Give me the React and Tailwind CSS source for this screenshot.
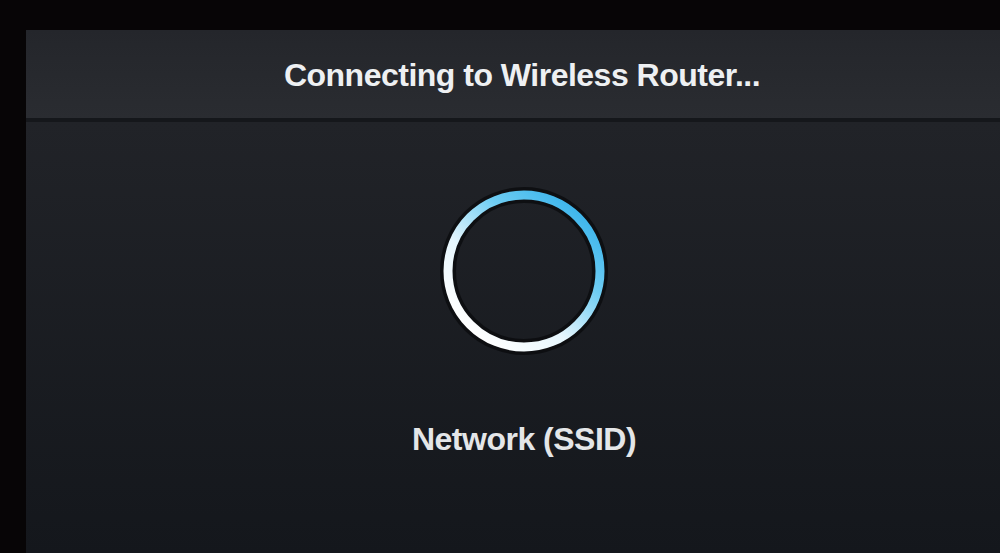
import React from 'react';

const Spinner = () => (
    <svg width="176" height="176" viewBox="0 0 176 176">
        <defs>
            <linearGradient id="ring" x1="0.15" y1="0.9" x2="0.85" y2="0.1">
                <stop offset="0" stopColor="#ffffff" />
                <stop offset="0.35" stopColor="#e6f6fd" />
                <stop offset="0.7" stopColor="#6fcdf3" />
                <stop offset="1" stopColor="#3fb6ec" />
            </linearGradient>
        </defs>
        <circle cx="88" cy="88" r="76" fill="none" stroke="#0a0b0e" strokeWidth="16" opacity="0.8" />
        <circle cx="88" cy="88" r="76" fill="none" stroke="url(#ring)" strokeWidth="9" />
    </svg>
);

const App = () => {
    return (
        <div className="w-[1000px] h-[553px] bg-[#070506] pt-[30px] pl-[26px] overflow-hidden" style={{ fontFamily: '"Liberation Sans", Arial, sans-serif' }}>
            <div className="h-full flex flex-col">
                <div className="h-[92px] shrink-0 bg-gradient-to-b from-[#24262b] to-[#2a2c31] border-b-[4px] border-[#15171b] flex items-center justify-center pt-[2px]">
                    <h1 className="text-[32px] font-semibold text-[#eef0f2] tracking-[-0.5px] pl-[18px]">Connecting to Wireless Router...</h1>
                </div>
                <div className="flex-1 bg-gradient-to-b from-[#212328] to-[#14171c] flex flex-col items-center">
                    <div className="mt-[61px] ml-[22px]">
                        <Spinner />
                    </div>
                    <p className="mt-[56px] ml-[22px] text-[32px] font-bold text-[#e4e6e8] tracking-[-0.5px]">Network (SSID)</p>
                </div>
            </div>
        </div>
    );
};

export default App;
